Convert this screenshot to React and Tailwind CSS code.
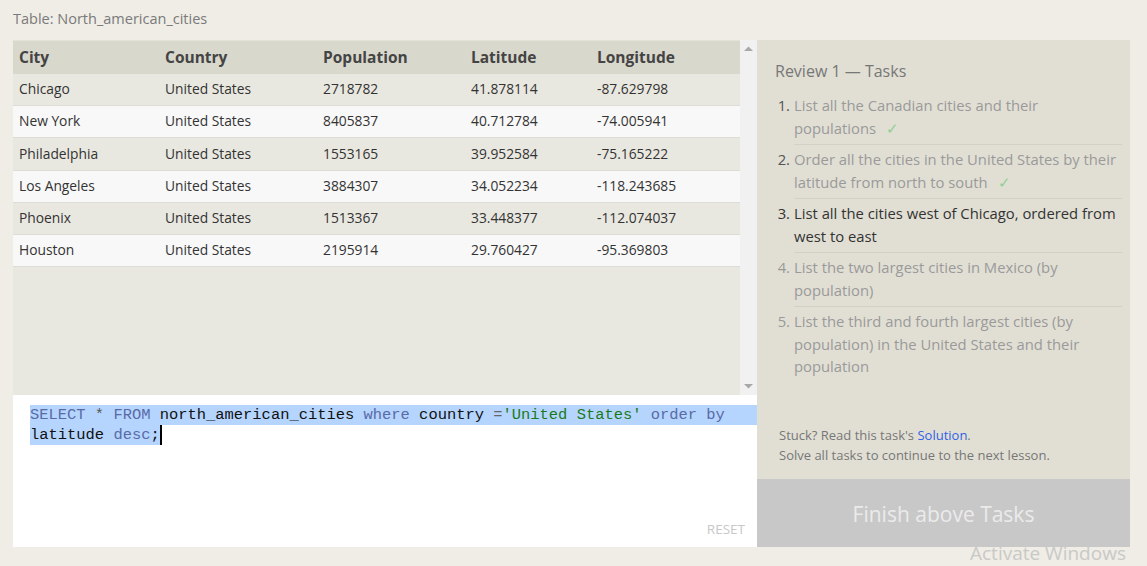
import React from "react";

const rows = [
  ["Chicago", "United States", "2718782", "41.878114", "-87.629798"],
  ["New York", "United States", "8405837", "40.712784", "-74.005941"],
  ["Philadelphia", "United States", "1553165", "39.952584", "-75.165222"],
  ["Los Angeles", "United States", "3884307", "34.052234", "-118.243685"],
  ["Phoenix", "United States", "1513367", "33.448377", "-112.074037"],
  ["Houston", "United States", "2195914", "29.760427", "-95.369803"],
];

const cols = ["w-[146px]", "w-[158px]", "w-[148px]", "w-[126px]", "flex-1"];
const heads = ["City", "Country", "Population", "Latitude", "Longitude"];

const tasks = [
  { n: "1.", lines: ["List all the Canadian cities and their", "populations"], done: true },
  { n: "2.", lines: ["Order all the cities in the United States by their", "latitude from north to south"], done: true },
  { n: "3.", lines: ["List all the cities west of Chicago, ordered from", "west to east"], active: true },
  { n: "4.", lines: ["List the two largest cities in Mexico (by", "population)"] },
  { n: "5.", lines: ["List the third and fourth largest cities (by", "population) in the United States and their", "population"] },
];

export default function App() {
  const font = { fontFamily: '"Open Sans", "Noto Sans", sans-serif' };
  return (
    <div className="relative w-[1147px] h-[566px] bg-[#efede6] overflow-hidden" style={font}>
      <div className="pl-[13px] pt-[8px] h-[40px] text-[14.5px] text-[#7a7a7a]">Table: North_american_cities</div>
      <div className="flex ml-[13px]">
        <div className="w-[744px] flex flex-col">
          <div className="flex h-[355px] bg-[#e9e8e0]">
            <div className="w-[727px]">
              <div className="flex h-[34px] bg-[#d9d8cc] items-center text-[15.5px] font-bold text-[#444] border-t border-[#e4e3d9]">
                {heads.map((h, i) => (
                  <div key={h} className={`${cols[i]} pl-[6px]`}>{h}</div>
                ))}
              </div>
              {rows.map((r, ri) => (
                <div
                  key={ri}
                  className={`flex h-[32.2px] items-center text-[13.8px] text-[#333] border-b border-[#dddcd6] ${ri % 2 === 0 ? "bg-[#e9e8e0]" : "bg-[#f8f8f8]"}`}
                >
                  {r.map((c, i) => (
                    <div key={i} className={`${cols[i]} pl-[6px]`}>{c}</div>
                  ))}
                </div>
              ))}
            </div>
            <div className="w-[17px] bg-[#f1f1f1] flex flex-col justify-between items-center py-[6px]">
              <svg width="9" height="6" viewBox="0 0 9 6"><path d="M0 5 L4.5 0.5 L9 5 Z" fill="#a8a8a8" /></svg>
              <svg width="9" height="6" viewBox="0 0 9 6"><path d="M0 1 L4.5 5.5 L9 1 Z" fill="#a8a8a8" /></svg>
            </div>
          </div>
          <div className="relative h-[152px] bg-white pt-[10px] pl-[17px]" style={{ fontFamily: '"Liberation Mono", "DejaVu Sans Mono", monospace' }}>
            <div className="text-[15.45px] leading-[20px]">
              <div className="bg-[#b5d5ff] whitespace-pre">
                <span className="text-[#5a6aa5]">SELECT</span>
                <span className="text-[#555]"> * </span>
                <span className="text-[#5a6aa5]">FROM</span>
                <span className="text-[#111]"> north_american_cities </span>
                <span className="text-[#5a6aa5]">where</span>
                <span className="text-[#111]"> country </span>
                <span className="text-[#666]">=</span>
                <span className="text-[#1a7a1a]">'United States'</span>
                <span> </span>
                <span className="text-[#5a6aa5]">order by</span>
              </div>
              <div className="flex">
                <div className="bg-[#b5d5ff] whitespace-pre">
                  <span className="text-[#111]">latitude </span>
                  <span className="text-[#5a6aa5]">desc</span>
                  <span className="text-[#111]">;</span>
                </div>
                <div className="w-[2px] h-[20px] bg-black" />
              </div>
            </div>
            <div className="absolute right-[12px] bottom-[8px] text-[13.5px] text-[#c8c8c8]" style={font}>RESET</div>
          </div>
        </div>
        <div className="w-[373px] h-[507px] bg-[#e1dfd4] flex flex-col">
          <div className="flex-1 pl-[18px] pr-[8px] pt-[20px]">
            <div className="text-[16px] text-[#777] leading-[22px]">Review 1 — Tasks</div>
            <div className="mt-[9px]">
              {tasks.map((t, i) => (
                <div key={i} className="flex">
                  <div className={`w-[19px] text-right pr-[4px] text-[14.8px] leading-[22.5px] pt-[3px] ${t.active ? "text-[#333]" : t.done ? "text-[#555]" : "text-[#999]"}`}>{t.n}</div>
                  <div className={`flex-1 text-[14.8px] leading-[22.5px] pt-[3px] pb-[5px] ${i < 4 ? "border-b border-[#d3d1c6]" : ""} ${t.active ? "text-[#333]" : "text-[#9a9a9a]"}`}>
                    {t.lines.map((l, j) => (
                      <div key={j}>
                        {l}
                        {t.done && j === t.lines.length - 1 && <span className="ml-[10px] text-[#8fd08f]">✓</span>}
                      </div>
                    ))}
                  </div>
                </div>
              ))}
            </div>
          </div>
          <div className="pl-[22px] pb-[14px] text-[13px] leading-[20px] text-[#777]">
            <div>Stuck? Read this task's <span className="text-[#2f5fe8]">Solution</span>.</div>
            <div>Solve all tasks to continue to the next lesson.</div>
          </div>
          <div className="h-[68px] bg-[#c8c8c8] flex items-center justify-center pt-[3px] text-[21px] text-[#ebebeb]">Finish above Tasks</div>
        </div>
      </div>
      <div className="absolute left-[970px] top-[539px] text-[19px] text-[#c9c9c6]">Activate Windows</div>
    </div>
  );
}
